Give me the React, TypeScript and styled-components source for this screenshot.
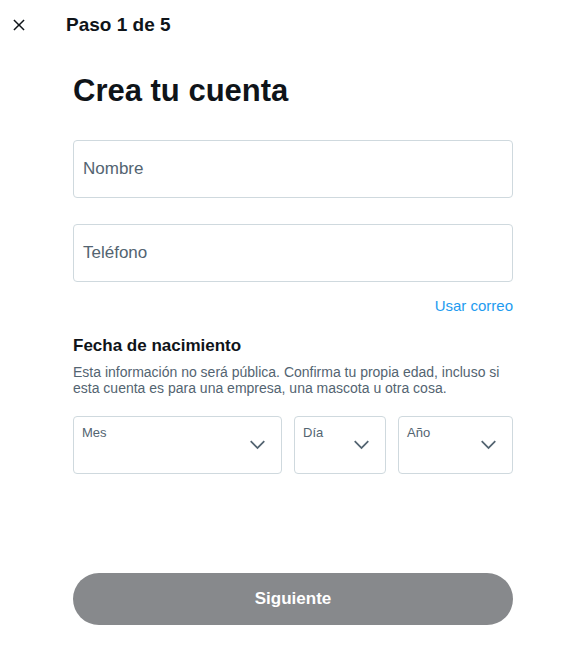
import React from "react";
import styled, { createGlobalStyle } from "styled-components";

const GlobalStyle = createGlobalStyle`
    html, body {
        margin: 0;
        padding: 0;
        background: #ffffff;
    }

    body {
        font-family: "Liberation Sans", Arial, sans-serif;
        color: #0f1419;
    }
`;

const CloseIcon = () => (
    <svg viewBox="0 0 24 24" width="18" height="18" aria-hidden="true">
        <path
            fill="#0f1419"
            d="M10.59 12L4.54 5.96l1.42-1.42L12 10.59l6.04-6.05 1.42 1.42L13.41 12l6.05 6.04-1.42 1.42L12 13.41l-6.04 6.05-1.42-1.42L10.59 12z"
        />
    </svg>
);

const ChevronIcon = () => (
    <svg viewBox="0 0 24 24" width="21" height="21" aria-hidden="true">
        <path
            fill="#536471"
            d="M3.543 8.96l1.414-1.42L12 14.59l7.043-7.05 1.414 1.42L12 17.41 3.543 8.96z"
        />
    </svg>
);

interface SelectProps {
    label: string
    width: number
}

const DateSelect: React.FC<SelectProps> = ({ label, width }) => (
    <SelectBox $width={width}>
        <SelectLabel>{label}</SelectLabel>
        <ChevronWrap>
            <ChevronIcon />
        </ChevronWrap>
    </SelectBox>
);

const App: React.FC = () => {
    return (
        <Page>
            <GlobalStyle />
            <Header>
                <CloseButton>
                    <CloseIcon />
                </CloseButton>
                <StepTitle>Paso 1 de 5</StepTitle>
            </Header>
            <Main>
                <Title>Crea tu cuenta</Title>
                <Field>
                    <Placeholder>Nombre</Placeholder>
                </Field>
                <Field $gap={26}>
                    <Placeholder>Teléfono</Placeholder>
                </Field>
                <SwitchLink>Usar correo</SwitchLink>
                <SectionTitle>Fecha de nacimiento</SectionTitle>
                <Hint>
                    Esta información no será pública. Confirma tu propia edad, incluso si
                    esta cuenta es para una empresa, una mascota u otra cosa.
                </Hint>
                <DateRow>
                    <DateSelect label="Mes" width={209} />
                    <DateSelect label="Día" width={92} />
                    <DateSelect label="Año" width={115} />
                </DateRow>
                <NextButton>Siguiente</NextButton>
            </Main>
        </Page>
    );
}

const Page = styled.div`
    width: 570px;
    height: 645px;
    background: #ffffff;
    display: flex;
    flex-direction: column;
`;

const Header = styled.header`
    display: flex;
    align-items: center;
    height: 50px;
    padding-left: 10px;
`;

const CloseButton = styled.div`
    display: flex;
    align-items: center;
    justify-content: center;
    width: 18px;
    height: 18px;
`;

const StepTitle = styled.h2`
    margin: 0 0 0 38px;
    font-size: 19px;
    font-weight: 700;
    line-height: 24px;
    color: #0f1419;
`;

const Main = styled.main`
    display: flex;
    flex-direction: column;
    width: 440px;
    margin-left: 73px;
`;

const Title = styled.h1`
    margin: 23px 0 0;
    font-size: 31px;
    font-weight: 700;
    line-height: 36px;
    color: #0f1419;
`;

const Field = styled.div<{ $gap?: number }>`
    display: flex;
    align-items: center;
    box-sizing: border-box;
    height: 58px;
    margin-top: ${props => props.$gap ?? 31}px;
    padding: 0 9px;
    border: 1px solid #cfd9de;
    border-radius: 4px;
`;

const Placeholder = styled.span`
    font-size: 17px;
    color: #536471;
`;

const SwitchLink = styled.a`
    align-self: flex-end;
    margin-top: 14px;
    font-size: 15px;
    line-height: 20px;
    color: #1d9bf0;
    cursor: pointer;
`;

const SectionTitle = styled.h3`
    margin: 20px 0 0;
    font-size: 17px;
    font-weight: 700;
    line-height: 20px;
    color: #0f1419;
`;

const Hint = styled.p`
    margin: 8px 0 0;
    font-size: 14px;
    line-height: 16px;
    color: #536471;
`;

const DateRow = styled.div`
    display: flex;
    gap: 12px;
    margin-top: 20px;
`;

const SelectBox = styled.div<{ $width: number }>`
    position: relative;
    box-sizing: border-box;
    width: ${props => props.$width}px;
    height: 58px;
    padding: 8px 8px 0;
    border: 1px solid #cfd9de;
    border-radius: 4px;
`;

const SelectLabel = styled.span`
    display: block;
    font-size: 13px;
    line-height: 16px;
    color: #536471;
`;

const ChevronWrap = styled.div`
    position: absolute;
    right: 13px;
    top: 17px;
    display: flex;
`;

const NextButton = styled.button`
    margin-top: 99px;
    height: 52px;
    border: none;
    border-radius: 9999px;
    background: #87898c;
    color: #ffffff;
    font-family: "Liberation Sans", Arial, sans-serif;
    font-size: 17px;
    font-weight: 700;
    cursor: default;
`;

export default App;
